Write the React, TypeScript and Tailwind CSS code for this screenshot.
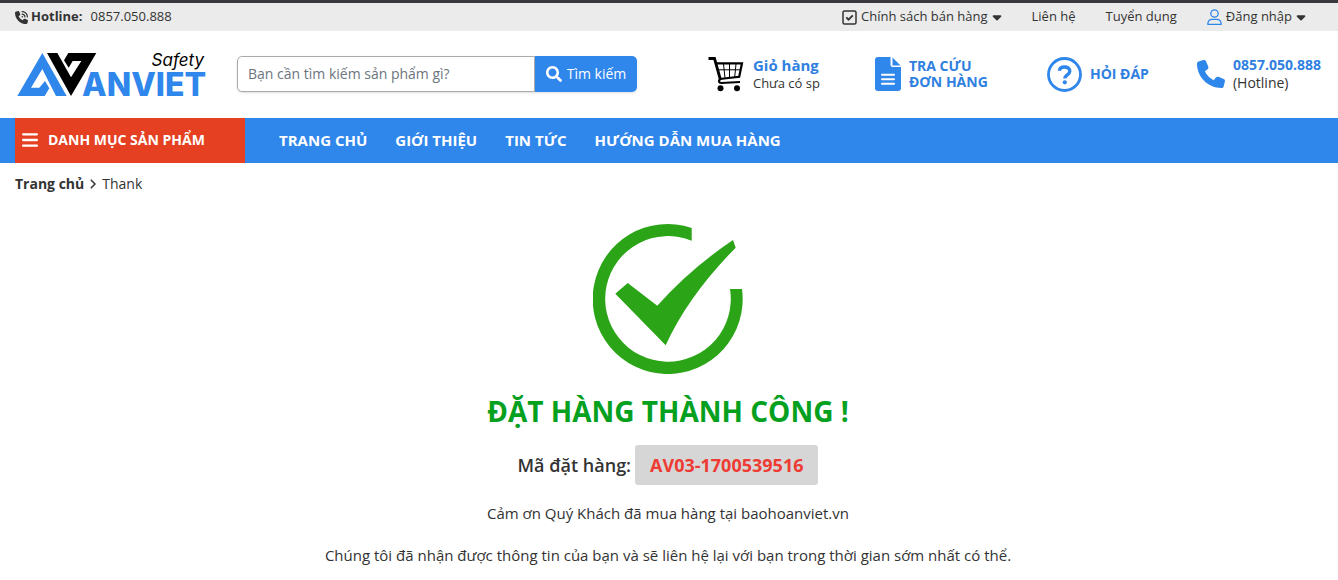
import React from 'react';
import { FaBars, FaCaretDown, FaPhone, FaPhoneVolume } from 'react-icons/fa6';
import { FaSearch } from 'react-icons/fa';

const menu = ['Trang chủ', 'Giới thiệu', 'Tin tức', 'Hướng dẫn mua hàng'];

const Logo = () => (
  <svg className="w-[190px] h-[62px]" viewBox="51 129 570 186" role="img" aria-label="Anviet Safety">
    <path
      fill="#2f86eb"
      d="M52 288 127 159 200 288H168L127 207 93 263H118L135 243 148 265 134 288Z"
    />
    <path
      fill="#000"
      d="M141 159H172L213 232 244 183H218L206 203 192 181 205 159H289L213 288Z"
    />
    <text x="246" y="288" fill="#2f86eb" fontSize="96" className="font-['Inter',sans-serif] font-extrabold">
      ANVIET
    </text>
    <text x="612" y="197" textAnchor="end" fontSize="51" className="font-['Inter',sans-serif] italic [font-feature-settings:'cv11']">
      Safety
    </text>
  </svg>
);

const CheckBoxIcon = () => (
  <svg className="w-[15px] h-[15px]" viewBox="0 0 15 15" fill="none" stroke="#333" strokeWidth="1.5" aria-hidden="true">
    <rect x="1" y="1" width="13" height="13" rx="1.5" />
    <path d="m4.3 7.4 2.2 2.3 4.3-4.4" strokeWidth="1.8" />
  </svg>
);

const UserIcon = () => (
  <svg className="w-[15px] h-4" viewBox="0 0 15 16" fill="none" stroke="#2f86eb" strokeWidth="1.3" aria-hidden="true">
    <circle cx="7.5" cy="4.5" r="3.7" />
    <path d="M.8 15.3c0-3.4 2-5 4.5-5h4.4c2.5 0 4.5 1.6 4.5 5Z" strokeLinejoin="round" />
  </svg>
);

const CartIcon = () => (
  <svg className="w-9 h-9" viewBox="0 0 36 36" fill="none" stroke="#000" aria-hidden="true">
    <path d="M.5 2.5h6l6 21.5" strokeWidth="2.8" />
    <path d="M8 7.3h26l-2.8 13.5-19.5 2.2" strokeWidth="2.2" />
    <path d="M9.5 13.8h23M15.5 8l1.5 14M21.5 8v13.5M28 8l-1.3 13" strokeWidth="1" />
    <path d="M12.5 23c-2.5 1.5-1.8 4 .8 4L32 26" strokeWidth="2.2" />
    <circle cx="12.5" cy="32.3" r="3" fill="#000" stroke="none" />
    <circle cx="29" cy="32.3" r="3" fill="#000" stroke="none" />
  </svg>
);

const FileIcon = () => (
  <svg className="w-[26px] h-[34px]" viewBox="0 0 26 34" fill="#2f86eb" aria-hidden="true">
    <path d="M3 0h12.5v7.5Q15.5 10 18 10H26v21q0 3-3 3H3q-3 0-3-3V3q0-3 3-3Z" />
    <path d="M17.5.5 25.5 8.5H17.5Z" />
    <path d="M7 17.8h12M7 22.3h12M7 26.8h12" stroke="#fff" strokeWidth="2" strokeLinecap="round" />
  </svg>
);

const QuestionIcon = () => (
  <svg className="w-[35px] h-[35px]" viewBox="0 0 35 35" fill="none" stroke="#2f86eb" aria-hidden="true">
    <circle cx="17.5" cy="17.5" r="16" strokeWidth="2.8" />
    <path d="M12.3 13.8c.4-2.6 2.4-3.8 5.2-3.8 3.1 0 5.3 1.6 5.3 4.2 0 3.8-5 3.4-5 7.3" strokeWidth="3.4" />
    <circle cx="17.8" cy="25.3" r="2.1" fill="#2f86eb" stroke="none" />
  </svg>
);

const SuccessIcon = () => (
  <svg className="w-[150px] h-[150px]" viewBox="0 0 150 150" fill="#2ba517" aria-hidden="true">
    <path d="M98.7 4A75 75 0 1 0 149 65H137A62.8 62.8 0 1 1 98.7 16.7Z" />
    <path d="M34.7 59 64.3 81.7Q97 45 140 16L142.7 23.7Q95 72 72.7 121.3L22.3 69.7Z" />
  </svg>
);

const TopBar = () => (
  <div className="flex items-center justify-between h-[31px] pl-[15px] pr-8 border-t-3 border-[#38383d] bg-[#ebebeb] text-[13px]">
    <a href="#hotline" className="flex items-center">
      <FaPhoneVolume className="w-[13px] h-[13px] mr-[3px]" />
      <b className="font-bold mr-2">Hotline:</b>
      <span>0857.050.888</span>
    </a>
    <nav className="flex items-center gap-[30px]">
      <button type="button" className="flex items-center">
        <CheckBoxIcon />
        <span className="ml-1 mr-1">Chính sách bán hàng</span>
        <FaCaretDown className="w-[10px] h-[14px]" />
      </button>
      <a href="#lien-he">Liên hệ</a>
      <a href="#tuyen-dung">Tuyển dụng</a>
      <button type="button" className="flex items-center">
        <UserIcon />
        <span className="ml-1 mr-1">Đăng nhập</span>
        <FaCaretDown className="w-[10px] h-[14px]" />
      </button>
    </nav>
  </div>
);

const Header = () => (
  <header className="flex items-center h-[87px] px-[17px] pb-px">
    <a href="#home">
      <Logo />
    </a>
    <form className="flex w-[400px] h-9 ml-[30px] rounded-[5px] shadow-sm" onSubmit={(e) => e.preventDefault()}>
      <input
        type="text"
        aria-label="Tìm kiếm sản phẩm"
        placeholder="Bạn cần tìm kiếm sản phẩm gì?"
        className="flex-1 min-w-0 px-[10px] rounded-l-[5px] border border-[#aaa] bg-white text-sm placeholder:text-[#6c757d]"
      />
      <button type="submit" className="flex items-center justify-center gap-[5px] w-[102px] rounded-r-[5px] bg-[#2f86eb] text-white text-sm">
        <FaSearch className="w-4 h-4" />
        Tìm kiếm
      </button>
    </form>

    {/* Quick links */}
    <div className="grid grid-cols-[167px_172px_150px_auto] items-center ml-auto">
      <a href="#gio-hang" className="flex items-center">
        <CartIcon />
        <span className="ml-[9px] text-[13px] leading-[18px]">
          <b className="block text-[15px] font-bold text-[#2f80e0]">Giỏ hàng</b>
          Chưa có sp
        </span>
      </a>
      <a href="#tra-cuu" className="flex items-center">
        <FileIcon />
        <b className="ml-2 text-sm leading-4 font-bold text-[#2f80e0] uppercase">
          Tra cứu
          <br />
          đơn hàng
        </b>
      </a>
      <a href="#hoi-dap" className="flex items-center">
        <QuestionIcon />
        <b className="ml-2 text-sm font-bold text-[#2f80e0] uppercase">Hỏi đáp</b>
      </a>
      <a href="#hotline" className="flex items-center">
        <FaPhone className="w-7 h-7 text-[#2f86eb]" />
        <span className="ml-2 text-sm leading-[18px]">
          <b className="block font-bold text-[#2f80e0]">0857.050.888</b>
          (Hotline)
        </span>
      </a>
    </div>
  </header>
);

const App = () => {
  return (
    <div className="bg-white text-[#333] font-['Open_Sans',sans-serif]">
      <TopBar />
      <Header />

      <nav className="flex items-center h-[45px] pl-[15px] bg-[#2f86eb] text-white text-sm font-bold uppercase">
        <button type="button" className="flex items-center w-[230px] h-full px-[7px] pb-px bg-[#e44021] uppercase">
          <FaBars className="w-4 h-5 mr-[10px]" />
          Danh mục sản phẩm
        </button>
        <div className="flex gap-7 ml-[34px] text-[15px]">
          {menu.map((item) => (
            <a key={item} href="#menu">
              {item}
            </a>
          ))}
        </div>
      </nav>

      <div className="flex items-center h-[42px] px-[15px] text-sm">
        <a href="#home" className="font-bold">
          Trang chủ
        </a>
        <svg className="w-[6px] h-[10px] mx-[6px]" viewBox="0 0 6 10" fill="none" stroke="#333" strokeWidth="1.5" aria-hidden="true">
          <path d="m.8.8 4.2 4.2-4.2 4.2" />
        </svg>
        <span>Thank</span>
      </div>

      <main className="flex flex-col items-center pl-[15px] pr-[17px] pt-[19px] pb-3 text-center">
        <SuccessIcon />
        <h1 className="mt-4 text-[28px] leading-[42px] font-bold text-[#04a01e] uppercase">Đặt hàng thành công !</h1>
        <p className="flex items-center gap-1 mt-[13px] text-lg font-semibold">
          Mã đặt hàng:
          <span className="px-[15px] rounded-[3px] bg-[#d6d6d6] leading-10 font-bold text-[#ee3b33]">AV03-1700539516</span>
        </p>
        <p className="mt-4 text-[15px] leading-6">Cảm ơn Quý Khách đã mua hàng tại baohoanviet.vn</p>
        <p className="mt-[18px] text-[15px] leading-6">
          Chúng tôi đã nhận được thông tin của bạn và sẽ liên hệ lại với bạn trong thời gian sớm nhất có thể.
        </p>
      </main>
    </div>
  );
};

export default App;
